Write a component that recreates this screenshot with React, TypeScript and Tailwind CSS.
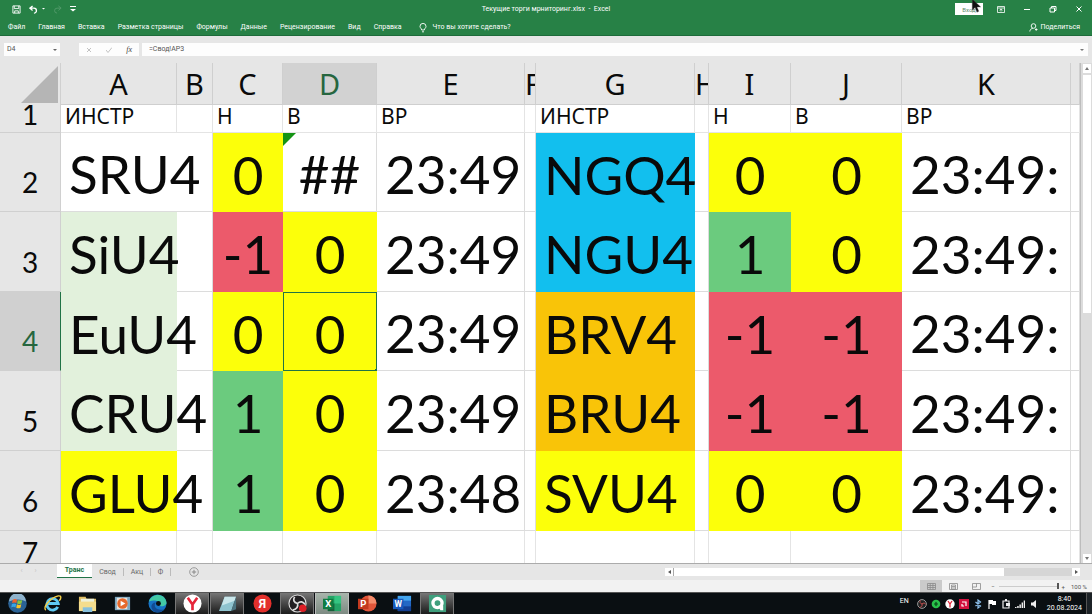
import React from "react";
import { clsx } from "clsx";

type Cell = { text?: string; bg?: string; align?: "left" | "center" };

const columns = [
  { name: "A", width: "w-[116px]" },
  { name: "B", width: "w-[36px]" },
  { name: "C", width: "w-[70px]" },
  { name: "D", width: "w-[94px]" },
  { name: "E", width: "w-[148px]" },
  { name: "F", width: "w-[11px]", narrow: true },
  { name: "G", width: "w-[159px]" },
  { name: "H", width: "w-[14px]", narrow: true },
  { name: "I", width: "w-[82px]" },
  { name: "J", width: "w-[111px]" },
  { name: "K", width: "w-[169px]" },
  { name: "", width: "" },
];

const yellow = "bg-[#fcff0a]";
const red = "bg-[#ec5a6b]";
const green = "bg-[#6bcb7e]";
const mint = "bg-[#e2f1dc]";
const blue = "bg-[#12bfee]";
const orange = "bg-[#f9c408]";

const titles = ["ИНСТР", "", "Н", "В", "ВР", "", "ИНСТР", "", "Н", "В", "ВР", ""];

const mark = (text: string, bg?: string): Cell => ({ text, bg, align: "center" });
const gap: Cell = {};

const rows: Cell[][] = [
  [{ text: "SRU4" }, gap, mark("0", yellow), mark("##"), { text: "23:49" }, gap, { text: "NGQ4", bg: blue }, gap, mark("0", yellow), mark("0", yellow), { text: "23:49:" }, gap],
  [{ text: "SiU4", bg: mint }, gap, mark("-1", red), mark("0", yellow), { text: "23:49" }, gap, { text: "NGU4", bg: blue }, gap, mark("1", green), mark("0", yellow), { text: "23:49:" }, gap],
  [{ text: "EuU4", bg: mint }, gap, mark("0", yellow), mark("0", yellow), { text: "23:49" }, gap, { text: "BRV4", bg: orange }, gap, mark("-1", red), mark("-1", red), { text: "23:49:" }, gap],
  [{ text: "CRU4", bg: mint }, gap, mark("1", green), mark("0", yellow), { text: "23:49" }, gap, { text: "BRU4", bg: orange }, gap, mark("-1", red), mark("-1", red), { text: "23:49:" }, gap],
  [{ text: "GLU4", bg: yellow }, gap, mark("1", green), mark("0", yellow), { text: "23:48" }, gap, { text: "SVU4", bg: yellow }, gap, mark("0", yellow), mark("0", yellow), { text: "23:49:" }, gap],
];

const ribbonTabs = ["Файл", "Главная", "Вставка", "Разметка страницы", "Формулы", "Данные", "Рецензирование", "Вид", "Справка"];

const TitleBar = () => (
  <div className="relative flex h-[18px] items-center justify-between pr-2 pl-3">
    <div className="flex items-center gap-2">
      <button aria-label="Сохранить">
        <svg viewBox="0 0 10 10" className="size-[9px]" fill="none" stroke="white">
          <path d="M1 1h8v8H1z M2.500 1v3h5V1 M3 9V6.500h4V9" />
        </svg>
      </button>
      <button aria-label="Отменить" className="flex items-center gap-1">
        <svg viewBox="0 0 10 10" className="size-[9px]" fill="none" stroke="white" strokeWidth="1.500">
          <path d="M4 1 1 3.500 4 6 M1 3.500h4.500a2.500 2.500 0 0 1 0 5.500" />
        </svg>
        <svg viewBox="0 0 4 2" className="w-[3px]" fill="white">
          <path d="M0 0h4L2 2z" />
        </svg>
      </button>
      <button aria-label="Вернуть" className="opacity-20">
        <svg viewBox="0 0 10 10" className="size-[9px]" fill="none" stroke="white">
          <path d="M6 1l3 2.500L6 6 M9 3.500H4.500a2.500 2.500 0 0 0 0 5.500" />
        </svg>
      </button>
      <button aria-label="Настройка панели">
        <svg viewBox="0 0 6 6" className="size-[6px]" fill="white">
          <path d="M0 0h6v1H0z M0 3h6L3 5.500z" />
        </svg>
      </button>
    </div>
    <span className="pointer-events-none absolute inset-x-0 text-center text-[7px] text-white">Текущие торги мрниторинг.xlsx&nbsp; -&nbsp; Excel</span>
    <div className="relative flex items-center gap-[18px] pr-px">
      <button className="-mr-1 h-3 w-7 bg-white text-[6px] text-[#5c8b6b]">Вход</button>
      <button aria-label="Параметры ленты">
        <svg viewBox="0 0 8 7" className="block h-[7px] w-2" fill="none" stroke="white">
          <path d="M.5.500h7v6h-7z M.5 2h7 M4 5.500V3 M2.500 4.200 4 3l1.500 1.200" strokeWidth=".8" />
        </svg>
      </button>
      <button aria-label="Свернуть">
        <svg viewBox="0 0 8 8" className="block size-2" stroke="white">
          <path d="M1 4.500h6" />
        </svg>
      </button>
      <button aria-label="Развернуть">
        <svg viewBox="0 0 8 8" className="block size-2" fill="none" stroke="white">
          <path d="M1 3h4.500v4H1z M2.500 3V1.500h4.500v4H5.500" />
        </svg>
      </button>
      <button aria-label="Закрыть">
        <svg viewBox="0 0 8 8" className="block size-2" stroke="white">
          <path d="M1.500 1.500l5 5 M6.500 1.500l-5 5" />
        </svg>
      </button>
      <svg viewBox="0 0 10 16" className="absolute -top-1 left-4 h-[15px] w-[10px]">
        <path d="M1 0v12l3-3 2 5 2-1-2-4.500h4z" fill="#111" stroke="#555" strokeWidth=".4" />
      </svg>
    </div>
  </div>
);

const Ribbon = () => (
  <nav className="flex h-[18px] items-center border-b border-[#1d6b3a] px-2 pt-0.5 text-[7px] text-white">
    <div className="flex flex-1 gap-[13px]">
      {ribbonTabs.map((tab) => (
        <button key={tab}>{tab}</button>
      ))}
      <button className="ml-1 flex items-center gap-[6px]">
        <svg viewBox="0 0 8 10" className="h-[10px] w-2" fill="none" stroke="white" strokeWidth=".9">
          <path d="M2.700 7C2.700 5.500 1 5 1 3.400a3 3 0 0 1 6 0C7 5 5.300 5.500 5.300 7z M3 8.800h2" />
        </svg>
        Что вы хотите сделать?
      </button>
    </div>
    <button className="mr-1 flex items-center gap-[3px]">
      <svg viewBox="0 0 9 9" className="size-[9px]" fill="none" stroke="white" strokeWidth=".9">
        <circle cx="4.500" cy="3" r="2.300" />
        <path d="M.8 8.500c.2-2 1.500-3 3-3.200M6 6.500h2.500M7.200 5.300v2.500" />
      </svg>
      Поделиться
    </button>
  </nav>
);

const FormulaBar = () => (
  <div className="flex h-[27px] items-center bg-[#e6e6e6] px-1 text-[7px] text-[#555]">
    <div className="flex h-[13px] w-14 items-center justify-between bg-[#fdfdfd] px-[3px]">
      <input aria-label="Имя ячейки" defaultValue="D4" className="w-8 outline-none" />
      <svg viewBox="0 0 4 2" className="w-1" fill="#666">
        <path d="M0 0h4L2 2z" />
      </svg>
    </div>
    <div className="ml-[19px] flex h-[13px] w-[60px] items-center justify-around bg-[#fdfdfd]">
      <button aria-label="Отмена">
        <svg viewBox="0 0 6 6" className="size-[6px]" stroke="#c2c2c2">
          <path d="M1 1l4 4M5 1 1 5" />
        </svg>
      </button>
      <button aria-label="Ввод">
        <svg viewBox="0 0 6 6" className="size-[6px]" fill="none" stroke="#c2c2c2">
          <path d="M0 3l2 2.500L6 .5" />
        </svg>
      </button>
      <button className="font-['Liberation_Serif',serif] text-[8px] leading-none text-[#444] italic">fx</button>
    </div>
    <div className="ml-[3px] flex h-[13px] flex-1 items-center bg-[#fdfdfd] px-1">
      <input aria-label="Строка формул" defaultValue="=Свод!AP3" className="w-full px-[3px] outline-none" />
      <svg viewBox="0 0 4 2" className="w-1 shrink-0" fill="#777">
        <path d="M0 0h4L2 2z" />
      </svg>
    </div>
  </div>
);

const Sheet = () => (
  <table className="w-full table-fixed border-separate border-spacing-0 font-['Noto_Sans',sans-serif] text-[#0a0a0a]">
    <colgroup>
      <col className="w-[61px]" />
      {columns.map((c, i) => (
        <col key={i} className={c.width} />
      ))}
    </colgroup>
    <thead>
      <tr className="h-[42px] bg-[#e6e6e6]">
        <th className="border-r border-[#d0d0d0] p-0 align-bottom">
          <svg viewBox="0 0 38 38" className="mr-0.5 mb-0.5 ml-auto size-[37px]" fill="#b5b5b5">
            <path d="M38 0v38H0z" />
          </svg>
        </th>
        {columns.map((c, i) => (
          <th
            key={i}
            className={clsx(
              "border-r border-b border-[#cfcfcf] p-0 text-[29px] leading-[42px] font-normal",
              c.name === "D" && "bg-[#d2d2d2] text-[#26663f]"
            )}
          >
            <div className={clsx("flex h-[41px] overflow-hidden", !c.narrow && "justify-center")}>{c.name}</div>
          </th>
        ))}
      </tr>
    </thead>
    <tbody>
      <tr className="h-7">
        <th className="border-r border-b border-[#d0d0d0] bg-[#e6e6e6] p-0 font-['Lato',sans-serif] text-[28px] font-normal">
          <div className="h-[27px] overflow-hidden leading-[18px]">1</div>
        </th>
        {titles.map((t, i) => (
          <td key={i} className="border-r border-b border-[#e4e4e4] bg-white p-0 align-top text-[21px] leading-[23px] whitespace-nowrap">
            <div className="pl-1">{t}</div>
          </td>
        ))}
      </tr>
      {rows.map((row, r) => (
        <tr key={r} className={clsx("font-['Lato',sans-serif]", r === 0 || r === 2 ? "h-[79px]" : "h-20")}>
          <th
            className={clsx(
              "border-r border-b border-[#d0d0d0] p-0 pb-[10px] align-bottom text-[28px] leading-[38px] font-normal",
              r === 2 ? "border-r-[#217346] bg-[#d0d0d0] text-[#26663f]" : "bg-[#e6e6e6]"
            )}
          >
            {r + 2}
          </th>
          {row.map((cell, c) => {
            const selected = r === 2 && c === 3;
            return (
              <td
                key={c}
                className={clsx(
                  "relative p-0 pt-1 text-[53px] leading-[70px] whitespace-nowrap",
                  cell.bg ?? "border-b border-[#dcdcdc]",
                  !cell.bg && c > 0 && "border-r",
                  selected && "outline outline-[#217346] -outline-offset-1",
                  cell.align === "center" ? "text-center" : "pl-2"
                )}
              >
                {cell.text}
                {cell.text === "##" && (
                  <svg viewBox="0 0 13 13" className="absolute top-0 left-0 size-[13px]" fill="#149414">
                    <path d="M0 0h13L0 13z" />
                  </svg>
                )}
                {selected && <span className="absolute right-0 bottom-0 size-0.5 bg-[#217346]" />}
              </td>
            );
          })}
        </tr>
      ))}
      <tr className="h-20 font-['Lato',sans-serif]">
        <th className="border-r border-[#d0d0d0] bg-[#e6e6e6] p-0 pt-0.5 align-top text-[28px] leading-[38px] font-normal">7</th>
        {columns.map((_, i) => (
          <td key={i} className="border-r border-[#e4e4e4]" />
        ))}
      </tr>
    </tbody>
  </table>
);

const VerticalScroll = () => (
  <div className="flex w-3 flex-col items-center border-l border-[#bdbdbd] bg-[#dcdcdc]">
    <button aria-label="Вверх" className="mt-px flex h-[9px] w-2 items-center justify-center bg-white">
      <svg viewBox="0 0 4 3" className="w-1" fill="#777">
        <path d="M0 3h4L2 0z" />
      </svg>
    </button>
    <div className="mt-0.5 h-[238px] w-2 bg-white" />
    <button aria-label="Вниз" className="mt-auto flex h-[9px] w-2 items-center justify-center bg-white">
      <svg viewBox="0 0 4 3" className="w-1" fill="#777">
        <path d="M0 0h4L2 3z" />
      </svg>
    </button>
  </div>
);

const SheetTabs = () => (
  <div className="flex h-[17px] items-start border-t border-[#ababab] bg-[#e6e6e6] text-[7px] text-[#666]">
    <div className="flex w-[57px] justify-center gap-3 leading-[14px] text-[#c4c4c4]">
      <span>‹</span>
      <span>›</span>
    </div>
    <button className="h-[14px] w-[35px] border-b border-[#217346] bg-white font-bold text-[#217346]">Транс</button>
    <button className="my-1 w-8 border-r border-[#bbb] leading-2">Свод</button>
    <button className="my-1 w-[27px] border-r border-[#bbb] leading-2">Акц</button>
    <button className="my-1 w-5 border-r border-[#bbb] leading-2">Ф</button>
    <button aria-label="Новый лист" className="mt-[3px] ml-[18px]">
      <svg viewBox="0 0 10 10" className="size-[10px]" fill="none" stroke="#888">
        <circle cx="5" cy="5" r="4.300" strokeWidth=".8" />
        <path d="M5 2.800v4.400M2.800 5h4.400" />
      </svg>
    </button>
    <div className="mt-1 mr-3 ml-auto flex h-2 w-[415px] bg-[#d6d6d6]">
      <button aria-label="Влево" className="flex w-[9px] items-center justify-center border-r border-[#aaa] bg-white">
        <svg viewBox="0 0 3 4" className="h-1" fill="#555">
          <path d="M3 0v4L0 2z" />
        </svg>
      </button>
      <div className="w-[330px] bg-white" />
      <button aria-label="Вправо" className="ml-auto flex w-2 items-center justify-center bg-white">
        <svg viewBox="0 0 3 4" className="h-1" fill="#555">
          <path d="M0 0v4l3-2z" />
        </svg>
      </button>
    </div>
  </div>
);

const StatusBar = () => (
  <div className="flex h-3 items-center justify-end bg-[#f2f2f2] pr-[5px] text-[6px] text-[#555]">
    <button aria-label="Обычный" className="flex h-3 w-[22px] items-center justify-center bg-[#cacaca]">
      <svg viewBox="0 0 9 7" className="h-[7px]" fill="none" stroke="#8a8a8a" strokeWidth=".8">
        <path d="M.5.500h8v6h-8zM.5 2.500h8M.5 4.500h8M3.200.5v6M5.900.5v6" />
      </svg>
    </button>
    <button aria-label="Разметка" className="flex w-[23px] justify-center">
      <svg viewBox="0 0 9 7" className="h-[7px]" fill="none" stroke="#8a8a8a" strokeWidth=".8">
        <path d="M.5.500h8v6h-8zM2.500 2h4v4.500h-4zM3 3.500h3M3 5h3" />
      </svg>
    </button>
    <button aria-label="Страничный" className="flex w-[22px] justify-center">
      <svg viewBox="0 0 9 7" className="h-[7px]" fill="none" stroke="#8a8a8a" strokeWidth=".8">
        <path d="M.5.500h8v6h-8zM.5 4h4V.5" />
      </svg>
    </button>
    <button aria-label="Уменьшить" className="px-1">−</button>
    <div className="flex h-3 w-[60px] items-center">
      <div className="h-px flex-1 bg-[#ccc]" />
      <div className="h-[6px] w-0.5 bg-[#555]" />
    </div>
    <button aria-label="Увеличить" className="mr-[6px] pl-[3px]">+</button>
    <span>100 %</span>
  </div>
);

const taskIcons: { name: string; state?: string; art: React.ReactNode }[] = [
  {
    name: "Пуск",
    art: (
      <>
        <circle cx="10" cy="10" r="9.800" fill="#2b6396" />
        <path d="M1 8a9 9 0 0 1 18 0c-5-3-12-3-18 0z" fill="#8fb3cc" />
        <path d="M5 6c2-1 3-.8 4.500 0L8.800 9.600c-1.500-.8-3-.8-4.500 0z" fill="#f0622d" />
        <path d="M10.300 6.300c1.500.8 3 .8 4.700 0l-.8 3.700c-1.500.7-3 .7-4.600-.1z" fill="#8bc63e" />
        <path d="M4.100 10.500c1.500-.8 3-.8 4.500 0l-.7 3.600c-1.500-.8-3-.8-4.500 0z" fill="#36a5e8" />
        <path d="M9.400 10.900c1.500.8 3 .8 4.600 0l-.8 3.600c-1.500.8-3 .8-4.500 0z" fill="#fbc324" />
      </>
    ),
  },
  {
    name: "Internet Explorer",
    art: (
      <>
        <path d="M15.500 13.500A6 6 0 1 1 16 10H5" fill="none" stroke="#5fc9f2" strokeWidth="3" />
        <path d="M3 17C-1 14 8 4 16 2c4-.5 3 3 1 5" fill="none" stroke="#f5cf48" strokeWidth="1.500" />
      </>
    ),
  },
  {
    name: "Проводник",
    art: (
      <>
        <path d="M1 3h7l1 2h10v13H1z" fill="#dfbd62" />
        <path d="M3 5h14v5H3z" fill="#eef2dc" />
        <path d="M1 8h18v10H1z" fill="#f4dd8d" />
        <path d="M5 14h10v5H5z" fill="#86c0dd" />
      </>
    ),
  },
  {
    name: "Проигрыватель",
    art: (
      <>
        <path d="M2 3h16v14H2z" fill="#7da7c0" />
        <path d="M4 4h11v12H4z" fill="#e9e2dc" />
        <circle cx="10" cy="10" r="5.500" fill="#e8692c" />
        <path d="M8 7l5 3-5 3z" fill="white" />
      </>
    ),
  },
  {
    name: "Edge",
    art: (
      <>
        <circle cx="10" cy="10" r="9.500" fill="#1673c6" />
        <path d="M1 8C3-1 18-2 19.500 9c0 4-6 5-7 3 2-4-6-7-11.500-4z" fill="#43c9a5" />
        <path d="M8 9c-3 5 2 9 9 7-3 4-9 4.500-12 1-3-4-1-8 3-8z" fill="#124b93" />
        <circle cx="11" cy="10" r="2.600" fill="#0a1014" />
      </>
    ),
  },
  {
    name: "Яндекс Браузер",
    state: "open",
    art: (
      <>
        <circle cx="10" cy="10" r="9.500" fill="white" />
        <path d="M5 4l5 7 5-7M10 10.500V17" fill="none" stroke="#e5263a" strokeWidth="2.800" />
      </>
    ),
  },
  {
    name: "Блокнот",
    state: "open",
    art: (
      <>
        <path d="M7 3h12l-5 15H1z" fill="#8fc4cf" />
        <path d="M7 3h12l-1.500 4L4 12z" fill="#c9e6ea" />
        <path d="M14 18l5-15v13z" fill="#4b7480" />
      </>
    ),
  },
  {
    name: "Яндекс",
    art: (
      <>
        <circle cx="10" cy="10" r="9.500" fill="#e3302c" />
        <text x="10" y="15" textAnchor="middle" fontSize="13" fontWeight="700" fill="white">Я</text>
      </>
    ),
  },
  {
    name: "OBS",
    state: "open",
    art: (
      <>
        <circle cx="10" cy="10" r="9" fill="#211f22" stroke="#ddd" strokeWidth="1.200" />
        <path d="M10 10C6 9 5 6 7 3M10 10c3-3 6-2 8 1M10 10c1 4-1 6-5 7" fill="none" stroke="#ddd" strokeWidth="1.800" />
        <circle cx="15.500" cy="15" r="4" fill="#dd1f26" />
      </>
    ),
  },
  {
    name: "Excel",
    state: "active",
    art: (
      <>
        <path d="M5 2h14v16H5z" fill="#24a466" />
        <path d="M12 2h7v8h-7z" fill="#35c481" />
        <path d="M5 10h7v8H5z" fill="#17603a" />
        <path d="M0 5h11v11H0z" fill="#107c41" />
        <text x="5.500" y="14" textAnchor="middle" fontSize="10" fontWeight="700" fill="white">X</text>
      </>
    ),
  },
  {
    name: "PowerPoint",
    art: (
      <>
        <circle cx="11" cy="10" r="8.500" fill="#e2563a" />
        <path d="M11 1.500a8.500 8.500 0 0 1 8.500 8.500H11z" fill="#f58d6c" />
        <path d="M0 5h11v11H0z" fill="#c33a1f" />
        <text x="5.500" y="14" textAnchor="middle" fontSize="10" fontWeight="700" fill="white">P</text>
      </>
    ),
  },
  {
    name: "Word",
    art: (
      <>
        <path d="M5 2h14v16H5z" fill="#2368c4" />
        <path d="M5 2h14v5H5z" fill="#43a5ee" />
        <path d="M5 13h14v5H5z" fill="#133f92" />
        <path d="M0 5h11v11H0z" fill="#185abd" />
        <text x="5.500" y="14" textAnchor="middle" fontSize="9" fontWeight="700" fill="white">W</text>
      </>
    ),
  },
  {
    name: "QUIK",
    state: "open",
    art: (
      <>
        <path d="M1 1h18v18H1z" fill="#3f9f7d" />
        <circle cx="10" cy="9.500" r="4.800" fill="none" stroke="white" strokeWidth="3.500" />
        <path d="M11 12h5v5h-3z" fill="white" />
      </>
    ),
  },
];

const trayIcons: { name: string; art: React.ReactNode }[] = [
  {
    name: "OBS",
    art: (
      <>
        <circle cx="5" cy="5" r="4.400" fill="#222" stroke="#b9b9b9" strokeWidth=".8" />
        <path d="M5 5C3 4.500 2.500 3 3.500 1.500M5 5c1.500-1.500 3-1 4 .5M5 5c.5 2-.5 3-2.500 3.500" fill="none" stroke="#c25050" />
      </>
    ),
  },
  {
    name: "Агент",
    art: (
      <>
        <circle cx="5" cy="5" r="4.300" fill="#29c14b" />
        <path d="M5 2.500 7 5 5 7.500 3 5z" fill="#0c5a20" />
      </>
    ),
  },
  {
    name: "Яндекс",
    art: (
      <>
        <circle cx="5" cy="5" r="4.700" fill="white" />
        <path d="M3 2l2 3 2-3M5 5v3.500" fill="none" stroke="#e5263a" strokeWidth="1.300" />
      </>
    ),
  },
  {
    name: "AMD",
    art: (
      <>
        <path d="M0 0h10v10H0z" fill="#d3123f" />
        <path d="M3 3h4v4M3 5v2h2" fill="none" stroke="white" strokeWidth="1.200" />
      </>
    ),
  },
  { name: "Bluetooth", art: <path d="M2.500 3l5 4L5 9V1l2.500 2-5 4" fill="none" stroke="#8fc4f0" strokeWidth="1.200" /> },
  {
    name: "Центр поддержки",
    art: (
      <>
        <path d="M2 1v9" stroke="white" strokeWidth="1.200" />
        <path d="M2 1h4v1h3v4H5V5H2z" fill="white" />
      </>
    ),
  },
  {
    name: "Питание",
    art: (
      <>
        <path d="M2 2h6v7H2z" fill="none" stroke="#eee" strokeWidth="1.200" />
        <path d="M4 0h2v2H4zM5 4h4v3H5z" fill="#eee" />
      </>
    ),
  },
  { name: "Сеть", art: <path d="M0 8h1.500v1H0zM2.200 7h1.500v2H2.200zM4.400 5.500h1.500V9H4.400zM6.600 3.500h1.400V9H6.600zM8.700 1.500H10V9H8.700z" fill="#eee" /> },
  { name: "Громкость", art: <path d="M2 3.500h2L7 1v8L4 6.500H2z" fill="#eee" /> },
];

const Taskbar = () => (
  <footer className="flex h-[22px] items-stretch border-t border-[#555] bg-[#0a0f12] text-white">
    {taskIcons.map((icon) => (
      <button
        key={icon.name}
        aria-label={icon.name}
        className={clsx(
          "mr-px flex w-[34px] items-center justify-center",
          icon.state === "open" && "border-x border-[#777] bg-linear-to-b from-[#777] to-[#1c1c1c]",
          icon.state === "active" && "border-x border-[#bbb] bg-linear-to-b from-[#a9b5ac] to-[#7d8a82]"
        )}
      >
        <svg viewBox="0 0 20 20" className="size-[19px]">
          {icon.art}
        </svg>
      </button>
    ))}
    <div className="ml-auto flex items-center">
      <span className="mr-2 pb-1 text-[7px]">EN</span>
      <div className="flex gap-1">
        {trayIcons.map((icon) => (
          <button key={icon.name} aria-label={icon.name}>
            <svg viewBox="0 0 10 10" className="block size-[10px]">
              {icon.art}
            </svg>
          </button>
        ))}
      </div>
      <div className="mr-1 ml-2 text-center text-[7px] leading-[9px]">
        <div>8:40</div>
        <div>20.08.2024</div>
      </div>
      <button aria-label="Показать рабочий стол" className="h-full w-[6px] border-l border-[#555] bg-[#1c2226]" />
    </div>
  </footer>
);

const App = () => {
  return (
    <div className="flex h-screen flex-col overflow-hidden bg-white font-['Roboto','Noto_Sans',sans-serif]">
      <header className="bg-[#278146]">
        <TitleBar />
        <Ribbon />
      </header>
      <FormulaBar />
      <main className="flex min-h-0 flex-1">
        <div className="min-w-0 flex-1 overflow-hidden">
          <Sheet />
        </div>
        <VerticalScroll />
      </main>
      <SheetTabs />
      <StatusBar />
      <Taskbar />
    </div>
  );
};

export default App;
